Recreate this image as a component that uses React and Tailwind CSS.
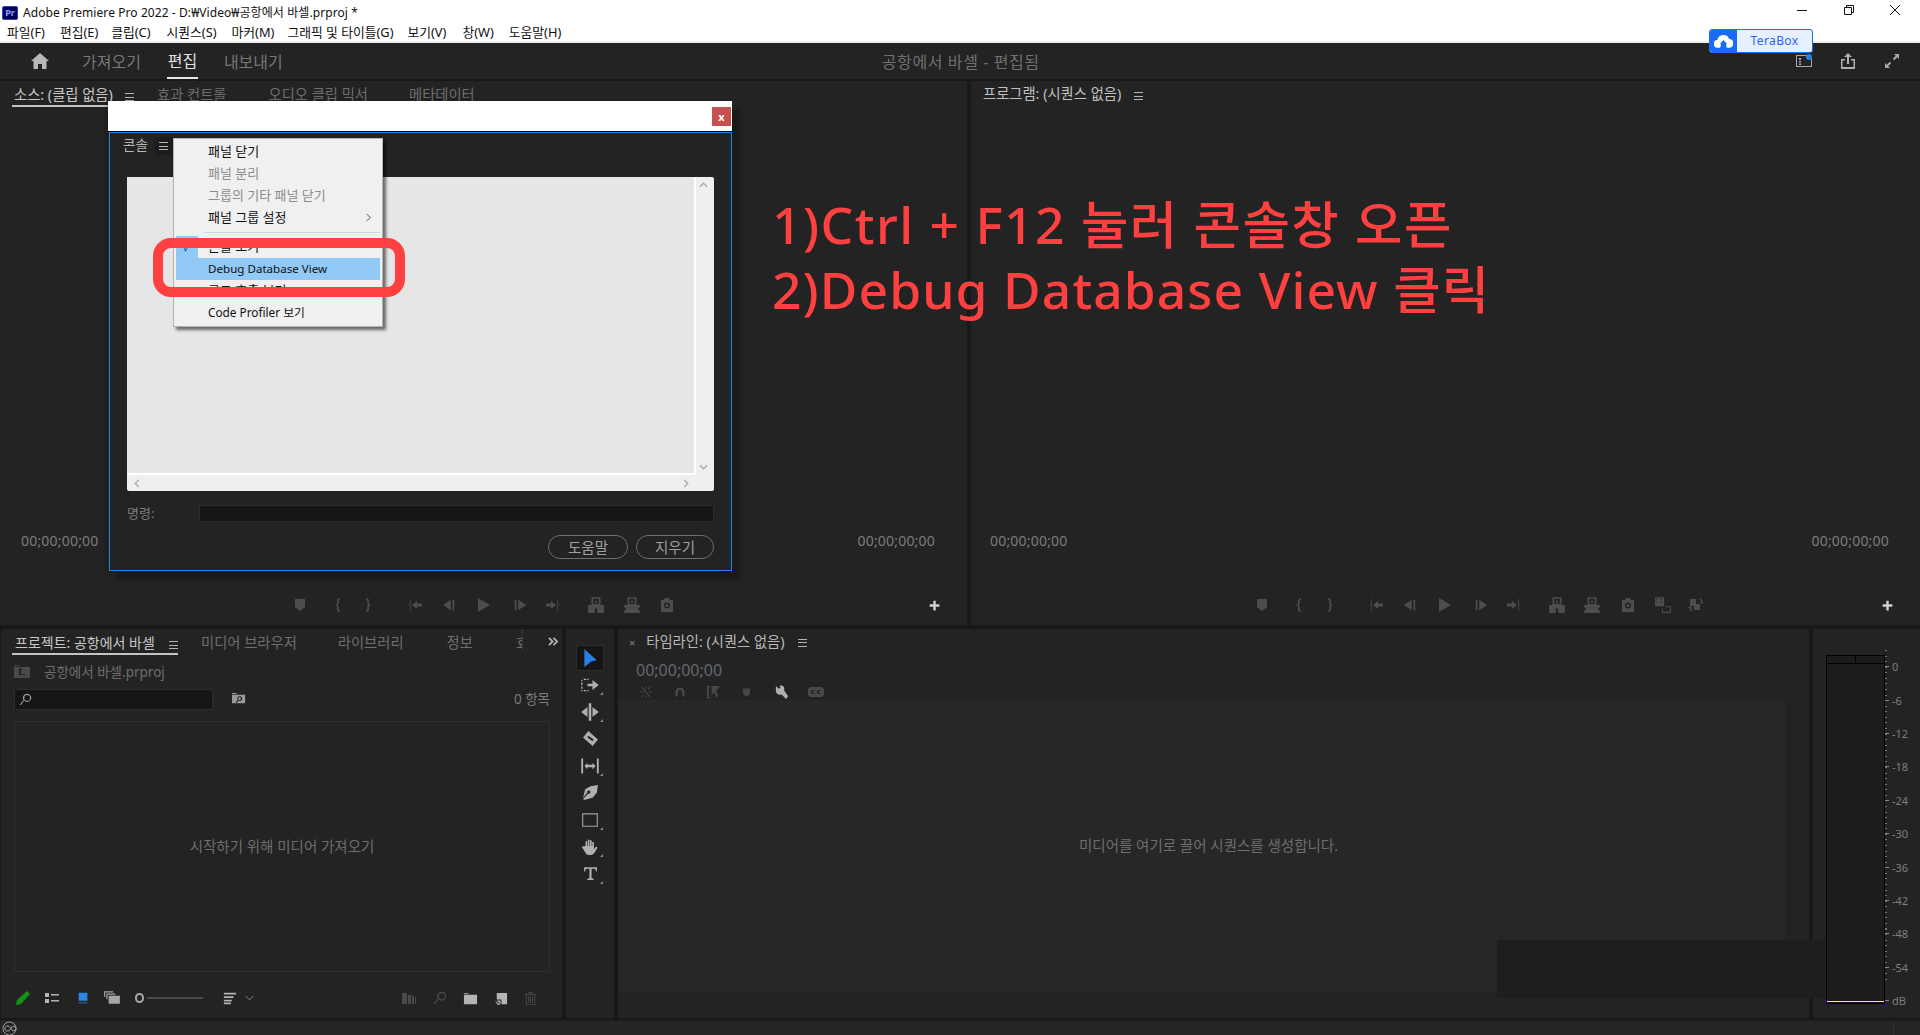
import React from "react";

const paths = {
  marker: <path d="M3 2h10v8l-5 4-5-4z" />,
  inMark: <path d="M11 1C7.500 1 8 4 8 6c0 1-.5 1.500-2 2 1.500.5 2 1 2 2 0 2-.5 5 3 5v-1.500c-1.500 0-1.300-2-1.300-3.500 0-1-.5-1.700-1.300-2 .8-.3 1.300-1 1.300-2 0-1.500-.2-3.500 1.300-3.500z" />,
  outMark: <path d="M5 1c3.500 0 3 3 3 5 0 1 .5 1.500 2 2-1.500.5-2 1-2 2 0 2 .5 5-3 5v-1.500c1.500 0 1.300-2 1.300-3.500 0-1 .5-1.700 1.300-2-.8-.3-1.300-1-1.300-2 0-1.500.2-3.500-1.300-3.500z" />,
  goIn: <path d="M4 2C2.500 2 3 4 3 6c0 1-.5 1.500-1.500 2C2.500 8.500 3 9 3 10c0 2-.5 4 1 4v-1c-.5 0-.2-2-.2-3 0-1-.4-1.500-1-2 .6-.5 1-1 1-2 0-1-.3-3 .2-3zM5 8l5-4v2.500h5v3h-5V12z" />,
  stepBack: <path d="M1 8l9-6v12zM12 2h2v12h-2z" />,
  play: <path d="M2 1l12 7-12 7z" />,
  stepFwd: <path d="M2 2h2v12H2zM6 2l9 6-9 6z" />,
  goOut: <path d="M12 2c1.500 0 1 2 1 4 0 1 .5 1.500 1.500 2-1 .5-1.500 1-1.500 2 0 2 .5 4-1 4v-1c.5 0 .2-2 .2-3 0-1 .4-1.500 1-2-.6-.5-1-1-1-2 0-1 .3-3-.2-3zM11 8L6 4v2.500H1v3h5V12z" />,
  insert: <path fillRule="evenodd" d="M4 1h8v7h3v7H9v-4H7v4H1V8h3zm1.500 1.500V7h5V2.500zm2.500 1L6.500 6h3z" />,
  overwrite: <path fillRule="evenodd" d="M4 1h8v7h3v7H1V8h3zm1.500 1.500V7h5V2.500zm2.500 1L6.500 6h3zM1 10v3l2-1.500zm14 0l-2 1.500 2 1.500z" />,
  camera: <path fillRule="evenodd" d="M5 3l1-2h4l1 2h3v12H2V3zm3 2.500a3 3 0 100 6 3 3 0 000-6zm0 1.500a1.500 1.500 0 110 3 1.500 1.500 0 010-3z" />,
  lift: <path fillRule="evenodd" d="M1 1h8v8H1zm1 1v1h1V2zm0 3v1h1V5zm4-3v1h1V2zm0 3v1h1V5zM10 9h5v6H7v-4h1v3h6v-4h-4z" />,
  compare: <path fillRule="evenodd" d="M2 2h6v5h4v6H6V9H2zM12 1c1.500 1 2.500 2.500 2.500 4H16l-2 2-2-2h1c0-1-.5-2-1.500-3zM4 15c-1.500-1-2.500-2-2.500-4H0l2-2 2 2H3c0 1 .5 2 1.500 3z" />,
  plus: <path d="M6.500 2h3v4.500H14v3H9.500V14h-3V9.500H2v-3h4.500z" />,
  arrow: <path d="M3 0l11 10-5 1-6 5z" />,
  trackSelect: <><path d="M1 4h1v1H1zm2-1h2v1H3zm3 0h1v1H6zM1 6h1v2H1zm0 3h1v2H1zm0 3h1v1H1zm2 0h2v1H3zm3 0h1v1H6z" /><path d="M6 7h4V4l5 4-5 4V9H6z" /></>,
  ripple: <path d="M7 1h2v14H7zM1 8l5-4v8zm14 0l-5-4v8z" />,
  razor: <path fillRule="evenodd" d="M6 1l9 8-5 6-9-8zm0 4.500L5 7l5 3.500 1-1.500z" />,
  slip: <path d="M1 2h1.500v12H1zm12.500 0H15v12h-1.500zM3.500 8L6 5.500V7h4V5.500L12.500 8 10 10.500V9H6v1.500z" />,
  pen: <path fillRule="evenodd" d="M15 1l-1 7-4 5-8 2-1-1 5-5a1.500 1.500 0 10-1-1L1 13 3 5l5-3z" />,
  rect: <path fillRule="evenodd" d="M1 2h14v12H1zm1 1v10h12V3z" />,
  hand: <path d="M4 7V3.500c0-1 1.500-1 1.500 0V7h.5V2c0-1 1.500-1 1.500 0v5H8V2.500c0-1 1.500-1 1.500 0V7h.5V4c0-1 1.500-1 1.500 0v6l1.500-2c.7-.8 2 0 1.500 1l-2.500 4c-.7 1-1.500 2-3.500 2H7c-2 0-2.500-1-3-2L1 8.500C.5 7.500 1.500 7 2.200 7.500z" />,
  textTool: <path d="M2 2h12v4h-1c0-1.500-.5-2.500-2-2.500H9v9l2 .5v1H5v-1l2-.5v-9H5C3.500 3.500 3 4.500 3 6H2z" />,
  nest: <path d="M7.500 1h1v3h-1zm0 11h1v3h-1zM1 7.500h4v1H1zm10 0h4v1h-4zM3 3l1-1 9 11-1 1zM5 11l1 1-2 2-1-1zm7-9l1 1-2 2-1-1z" />,
  magnet: <path d="M2 14V8a6 6 0 0112 0v6h-3V8a3 3 0 00-6 0v6z" />,
  linked: <path d="M1 1h4v1H3v11h2v1H1zm5 0h9l-4 5 2 6-2 1-2-5-3 3z" />,
  wrench: <path d="M2 1l3 3 2-1-1-2c2-1 5 0 5 3 0 .5 0 1-.3 1.500L15 12l-2 3-5-5c-2 1-6 0-6-4z" />,
  cc: <path fillRule="evenodd" d="M2 3h12l2 2v6l-2 2H2l-2-2V5zm4.500 3H4L3 7v2l1 1h2.500V9H4.500V7h2zm6 0H10L9 7v2l1 1h2.500V9h-2V7h2z" />,
  pencil: <path d="M12 1l3 3-9 10-4 1H1l1-5z" />,
  listView: <path d="M1 3h4v4H1zm0 6h4v4H1zm6-5h8v1.500H7zm0 6h8v1.500H7z" />,
  iconView: <path d="M3 2h10v9H3zm0 11h10v1H3z" />,
  freeform: <path d="M1 2h8v1H2v4H1zm2 2h8v1H4v4H3zm2 2h10v7H5z" />,
  sort: <path d="M1 2h14v2H1zm0 4h11v2H1zm0 4h9v2H1zm0 3h8v2H1z" />,
  bins: <path d="M1 3h5v11H1zm6 2h3v9H7zm4 1h2v8h-2zm3 1h1v7h-1z" />,
  find: <path fillRule="evenodd" d="M10 1a5 5 0 11-3.800 8.200L2 15l-1-1 4.500-5.500A5 5 0 0110 1zm0 1.500a3.500 3.500 0 100 7 3.500 3.500 0 000-7z" />,
  folder: <path d="M1 2h5v1H1zm0 2h14v10H1z" />,
  newItem: <path d="M4 2h11v12H9v-5H4zm0 8h4v4zM2 10l6 5H5z" />,
  trash: <path fillRule="evenodd" d="M6 1h4v2h4v1h-1v11H3V4H2V3h4zm1 1v1h2V2zM4 4v10h8V4zm1.500 1.500h1v7h-1zm2 0h1v7h-1zm2 0h1v7h-1z" />,
  share: <path fillRule="evenodd" d="M8 0l4 4h-3v7H7V4H4zM1 6h4v1.500H2.500V14h11V7.500H11V6h4v10H1z" />,
  expand: <path d="M10 1h5v5l-1.800-1.800-3 3L8.800 5.800l3-3zM6 15H1v-5l1.800 1.800 3-3 1.400 1.400-3 3z" />,
  folderUp: <path fillRule="evenodd" d="M0 1h6v1H0zm0 2h16v11H0zm5 3v5h6v-1H7V6h1.500L6.500 4 4.500 6z" />,
  binFind: <path fillRule="evenodd" d="M0 1h5v1H0zm0 2h14v9H0zm8 1.500a2.500 2.500 0 00-2 4L4 11l.8.6L7 9a2.500 2.500 0 101-4.500zm0 1a1.500 1.500 0 110 3 1.500 1.500 0 010-3z" />,
  workspace: <path fillRule="evenodd" d="M0 2h13v1H1v10h14V6h1v8H0zm3 3h2v2H3zm0 3h2v1.500H3zm0 2.500h2V12H3z" />,
};

const Icon = ({ name, className = "w-4 h-4 text-[#4d4d4d]" }) => (
  <svg viewBox="0 0 16 16" fill="currentColor" className={`shrink-0 ${className}`}>
    {paths[name]}
  </svg>
);

const Burger = ({ className = "" }) => (
  <div className={`w-[9px] h-[8px] flex flex-col justify-between shrink-0 ${className}`}>
    <div className="h-px bg-[#b4b4b4]" />
    <div className="h-px bg-[#b4b4b4]" />
    <div className="h-px bg-[#b4b4b4]" />
  </div>
);

const Tool = ({ name, size = "w-[20px] h-[20px]", color = "text-[#b0b0b0]", corner = true }) => (
  <div className="relative flex items-center justify-center w-[28px] h-[27px]">
    <Icon name={name} className={`${size} ${color}`} />
    {corner && <div className="absolute right-[1px] bottom-[3px] w-0 h-0 border-l-[3px] border-l-transparent border-b-[3px] border-b-[#8a8a8a]" />}
  </div>
);

const Timecode = () => (
  <span className="text-[14px] leading-none tracking-[0.2px] text-[#7c7c7c]">00;00;00;00</span>
);

const TitleBar = () => (
  <div className="h-[43px] bg-white border-b-2 border-[#f0f0f0] flex flex-col shrink-0">
    <div className="h-[25px] flex items-center text-[12px] text-[#111]">
      <div className="ml-[2px] w-[16px] h-[14px] bg-[#00005b] border border-[#3b3bb0] rounded-[2px] flex items-center justify-center text-[9px] font-bold leading-none text-[#9999ff]">
        Pr
      </div>
      <span className="ml-[5px] whitespace-nowrap tracking-[0.08px]">Adobe Premiere Pro 2022 - D:₩Video₩공항에서 바셀.prproj *</span>
      <div className="ml-auto flex items-center mb-[5px]">
        <svg viewBox="0 0 12 12" className="w-[12px] h-[12px] mr-[35px]"><path d="M1 6.500h10" stroke="#111" /></svg>
        <svg viewBox="0 0 12 12" className="w-[12px] h-[12px] mr-[34px]" fill="none" stroke="#111"><path d="M1.500 3.500h7v7h-7zM3.500 3.500v-2h7v7h-2" /></svg>
        <svg viewBox="0 0 12 12" className="w-[12px] h-[12px] mr-[19px]" stroke="#111"><path d="M1 1l10 10M11 1L1 11" /></svg>
      </div>
    </div>
    <div className="h-[16px] pb-[1px] flex items-center text-[12.8px] leading-none text-[#111] whitespace-nowrap pl-[7px]">
      <span>파일(F)</span>
      <span className="ml-[15px]">편집(E)</span>
      <span className="ml-[13px]">클립(C)</span>
      <span className="ml-[16px]">시퀀스(S)</span>
      <span className="ml-[15px]">마커(M)</span>
      <span className="ml-[13px]">그래픽 및 타이틀(G)</span>
      <span className="ml-[14px]">보기(V)</span>
      <span className="ml-[16px]">창(W)</span>
      <span className="ml-[15px]">도움말(H)</span>
    </div>
  </div>
);

const Header = () => (
  <div className="h-[36px] mb-[2px] bg-[#232323] flex items-stretch shrink-0 relative">
    <div className="w-[82px] flex items-center pl-[31px]">
      <svg viewBox="0 0 18 16" className="w-[18px] h-[16px]" fill="#b8b8b8"><path d="M9 0l9 8h-2.500v8H11v-5H7v5H2.500V8H0z" /></svg>
    </div>
    <div className="flex items-center text-[16px] leading-none text-[#777] pt-[2px]">
      <span>가져오기</span>
      <div className="ml-[26px] w-[31px] h-full flex items-center justify-center text-[#e0e0e0] border-b-2 border-[#e6e6e6]">편집</div>
      <span className="ml-[26px]">내보내기</span>
    </div>
    <div className="ml-[599px] flex items-center text-[16px] tracking-[0.6px] pt-[1px] text-[#707070] whitespace-nowrap">공항에서 바셀 - 편집됨</div>
    <div className="ml-auto flex items-center pr-[20px]">
      <div className="relative mr-[28px]">
        <Icon name="workspace" className="w-4 h-4 text-[#a8a8a8]" />
        <div className="absolute top-[1px] right-0 w-[6px] h-[6px] rounded-full bg-[#2680eb]" />
      </div>
      <Icon name="share" className="w-4 h-4 text-[#b0b0b0] mr-[28px]" />
      <Icon name="expand" className="w-4 h-4 text-[#a8a8a8]" />
    </div>
  </div>
);

const Transport = ({ children, className }) => (
  <div className={`h-[20px] mb-[10px] flex items-center shrink-0 ${className}`}>{children}</div>
);

const Plus = () => <Icon name="plus" className="w-[13px] h-[13px] text-[#d0d0d0] ml-auto" />;

const SourcePanel = () => (
  <div className="w-[967px] bg-[#232323] flex flex-col">
    <div className="h-[26px] flex items-start pl-[12px] text-[14.3px] leading-none text-[#6e6e6e] whitespace-nowrap">
      <div className="h-[26px] pl-[2px] w-[102px] border-b-2 border-[#c4c4c4] pt-[7px] text-[#c8c8c8]">소스: (클립 없음)</div>
      <Burger className="ml-[11px] mt-[12px]" />
      <span className="ml-[23px] pt-[7px]">효과 컨트롤</span>
      <span className="ml-[42px] pt-[7px]">오디오 클립 믹서</span>
      <span className="ml-[41px] pt-[7px]">메타데이터</span>
    </div>
    <div className="mt-auto mb-[44px] h-[20px] flex items-center justify-between pl-[21px] pr-[32px]">
      <Timecode />
      <Timecode />
    </div>
    <Transport className="pl-[292px] pr-[26px]">
      <Icon name="marker" />
      <Icon name="inMark" className="w-4 h-4 text-[#4d4d4d] ml-[21px]" />
      <Icon name="outMark" className="w-4 h-4 text-[#4d4d4d] ml-[16px]" />
      <Icon name="goIn" className="w-4 h-4 text-[#4d4d4d] ml-[30px]" />
      <Icon name="stepBack" className="w-[14px] h-[14px] text-[#4d4d4d] ml-[19px]" />
      <Icon name="play" className="w-4 h-4 text-[#4d4d4d] ml-[20px]" />
      <Icon name="stepFwd" className="w-[14px] h-[14px] text-[#4d4d4d] ml-[21px]" />
      <Icon name="goOut" className="w-4 h-4 text-[#4d4d4d] ml-[18px]" />
      <Icon name="insert" className="w-[18px] h-[18px] text-[#4d4d4d] ml-[26px]" />
      <Icon name="overwrite" className="w-[18px] h-[18px] text-[#4d4d4d] ml-[18px]" />
      <Icon name="camera" className="w-4 h-4 text-[#4d4d4d] ml-[18px]" />
      <Plus />
    </Transport>
  </div>
);

const ProgramPanel = () => (
  <div className="flex-1 bg-[#232323] flex flex-col">
    <div className="h-[26px] flex items-start pl-[12px] text-[14.3px] leading-none text-[#c0c0c0] whitespace-nowrap">
      <span className="pt-[6px]">프로그램: (시퀀스 없음)</span>
      <Burger className="ml-[13px] mt-[11px]" />
    </div>
    <div className="mt-auto mb-[44px] h-[20px] flex items-center justify-between pl-[19px] pr-[31px]">
      <Timecode />
      <Timecode />
    </div>
    <Transport className="pl-[283px] pr-[26px]">
      <Icon name="marker" />
      <Icon name="inMark" className="w-4 h-4 text-[#4d4d4d] ml-[20px]" />
      <Icon name="outMark" className="w-4 h-4 text-[#4d4d4d] ml-[17px]" />
      <Icon name="goIn" className="w-4 h-4 text-[#4d4d4d] ml-[29px]" />
      <Icon name="stepBack" className="w-[14px] h-[14px] text-[#4d4d4d] ml-[19px]" />
      <Icon name="play" className="w-4 h-4 text-[#4d4d4d] ml-[20px]" />
      <Icon name="stepFwd" className="w-[14px] h-[14px] text-[#4d4d4d] ml-[21px]" />
      <Icon name="goOut" className="w-4 h-4 text-[#4d4d4d] ml-[18px]" />
      <Icon name="insert" className="w-[18px] h-[18px] text-[#4d4d4d] ml-[26px]" />
      <Icon name="overwrite" className="w-[18px] h-[18px] text-[#4d4d4d] ml-[17px]" />
      <Icon name="camera" className="w-4 h-4 text-[#4d4d4d] ml-[19px]" />
      <Icon name="lift" className="w-[18px] h-[18px] text-[#4d4d4d] ml-[18px]" />
      <Icon name="compare" className="w-4 h-4 text-[#4d4d4d] ml-[16px]" />
      <Plus />
    </Transport>
  </div>
);

const ProjectPanel = () => (
  <div className="ml-[1px] w-[561px] bg-[#232323] flex flex-col pl-[13px] pr-[12px]">
    <div className="h-[26px] flex items-start text-[14.3px] leading-none text-[#6e6e6e] whitespace-nowrap -ml-[2px]">
      <div className="h-[26px] shrink-0 pl-[3px] w-[166px] border-b-2 border-[#c4c4c4] flex items-start pt-[7px] text-[14px] text-[#c8c8c8]">
        <span>프로젝트: 공항에서 바셀</span>
        <Burger className="ml-auto mt-[5px]" />
      </div>
      <span className="ml-[23px] shrink-0 pt-[7px]">미디어 브라우저</span>
      <span className="ml-[41px] shrink-0 pt-[7px]">라이브러리</span>
      <span className="ml-[43px] shrink-0 pt-[7px]">정보</span>
      <span className="ml-[43px] shrink-0 pt-[7px] w-[7px] overflow-hidden border-r border-[#3a3a3a]">효과</span>
      <svg viewBox="0 0 12 10" className="ml-[25px] mt-[8px] w-[11px] h-[9px] shrink-0" fill="none" stroke="#b0b0b0" strokeWidth="2"><path d="M1 1l4 4-4 4M6 1l4 4-4 4" /></svg>
    </div>
    <div className="h-[34px] flex items-center text-[#6e6e6e] whitespace-nowrap">
      <Icon name="folderUp" className="w-4 h-4 text-[#4a4a4a]" />
      <span className="ml-[14px] text-[13.5px]">공항에서 바셀.prproj</span>
    </div>
    <div className="h-[21px] flex items-center">
      <div className="w-[199px] h-[21px] bg-[#151515] border border-[#2e2e2e] rounded-[2px] flex items-center pl-[4px]">
        <Icon name="find" className="w-[13px] h-[13px] text-[#a0a0a0]" />
      </div>
      <Icon name="binFind" className="w-[15px] h-[15px] text-[#9a9a9a] ml-[19px]" />
      <span className="ml-auto text-[13.5px] text-[#7c7c7c]">0 항목</span>
    </div>
    <div className="mt-[11px] h-[251px] border border-[#2e2e2e] flex items-center justify-center text-[14.5px] text-[#6e6e6e]">
      시작하기 위해 미디어 가져오기
    </div>
    <div className="flex-1 flex items-center pl-[1px] pt-[6px]">
      <Icon name="pencil" className="w-[16px] h-[16px] text-[#149414]" />
      <Icon name="listView" className="w-[16px] h-[16px] text-[#b4b4b4] ml-[13px]" />
      <Icon name="iconView" className="w-[14px] h-[14px] text-[#2f86ea] ml-[16px]" />
      <Icon name="freeform" className="w-[18px] h-[18px] text-[#a6a6a6] ml-[13px]" />
      <div className="w-[9px] h-[10px] rounded-full border-2 border-[#a6a6a6] ml-[14px]" />
      <div className="w-[56px] h-[2px] bg-[#4a4a4a] ml-[3px]" />
      <Icon name="sort" className="w-[14px] h-[14px] text-[#b4b4b4] ml-[20px]" />
      <svg viewBox="0 0 10 6" className="w-[9px] h-[6px] ml-[8px]" fill="none" stroke="#9a9a9a"><path d="M1 1l4 4 4-4" /></svg>
      <Icon name="bins" className="w-[16px] h-[16px] text-[#4a4a4a] ml-[147px]" />
      <Icon name="find" className="w-[14px] h-[14px] text-[#4a4a4a] ml-[16px]" />
      <Icon name="folder" className="w-[15px] h-[15px] text-[#b4b4b4] ml-[16px]" />
      <Icon name="newItem" className="w-[15px] h-[15px] text-[#b4b4b4] ml-[15px]" />
      <Icon name="trash" className="w-[15px] h-[15px] text-[#4a4a4a] ml-[15px]" />
    </div>
  </div>
);

const Tools = () => (
  <div className="w-[48px] bg-[#232323] flex flex-col items-center pt-[16px]">
    <div className="relative flex items-center justify-center w-[28px] h-[26px] bg-[#151515] border border-[#2e2e2e] rounded-[3px]">
      <Icon name="arrow" className="w-[18px] h-[18px] text-[#2680eb]" />
    </div>
    <Tool name="trackSelect" />
    <Tool name="ripple" />
    <Tool name="razor" size="w-[17px] h-[17px]" corner={false} />
    <Tool name="slip" />
    <Tool name="pen" size="w-[17px] h-[17px]" corner={false} />
    <Tool name="rect" size="w-[18px] h-[18px]" color="text-[#a0a0a0]" />
    <Tool name="hand" size="w-[18px] h-[18px]" />
    <Tool name="textTool" size="w-[17px] h-[17px]" />
  </div>
);

const Timeline = () => (
  <div className="w-[1191px] bg-[#232323] flex flex-col">
    <div className="h-[71px] w-full flex flex-col pl-[11px] shrink-0">
      <div className="h-[27px] flex items-center text-[14.3px] leading-none text-[#b8b8b8] whitespace-nowrap">
        <span className="text-[11px] text-[#888]">×</span>
        <span className="ml-[11px]">타임라인: (시퀀스 없음)</span>
        <Burger className="ml-[13px]" />
      </div>
      <span className="mt-[6px] pl-[7px] text-[16px] leading-none text-[#63696f]">00;00;00;00</span>
      <div className="mt-[6px] h-[16px] pl-[10px] flex items-center">
        <Icon name="nest" className="w-[14px] h-[14px] text-[#484848]" />
        <Icon name="magnet" className="w-[12px] h-[12px] text-[#484848] ml-[21px]" />
        <Icon name="linked" className="w-[15px] h-[15px] text-[#484848] ml-[20px]" />
        <Icon name="marker" className="w-[11px] h-[11px] text-[#484848] ml-[20px]" />
        <Icon name="wrench" className="w-[15px] h-[15px] text-[#b0b0b0] ml-[22px]" />
        <Icon name="cc" className="w-[16px] h-[16px] text-[#484848] ml-[19px]" />
      </div>
    </div>
    <div className="h-[292px] mr-[24px] bg-[#272727] flex items-center justify-center pl-[14px] text-[14.5px] text-[#6e6e6e] shrink-0">
      미디어를 여기로 끌어 시퀀스를 생성합니다.
    </div>
  </div>
);

const dbLabels = ["0", "-6", "-12", "-18", "-24", "-30", "-36", "-42", "-48", "-54", "dB"];

const Meter = () => (
  <div className="flex-1 bg-[#232323] flex items-start pl-[13px] pt-[26px] relative z-10">
    <div className="w-[59px] h-[349px] bg-[#1c1c1c] border border-black flex flex-col shrink-0">
      <div className="h-[8px] border-b border-black flex shrink-0">
        <div className="w-1/2 border-r border-black" />
      </div>
      <div className="flex-1 flex flex-col justify-end">
        <div className="h-[1px] bg-[#ffff00] mb-[1px]" />
      </div>
    </div>
    <div className="-mt-[5px] flex flex-col text-[11px] leading-none text-[#7f7f7f] bg-[repeating-linear-gradient(to_bottom,#777_0,#777_1px,transparent_1px,transparent_5.57px)] bg-no-repeat bg-[length:2px_334px]">
      {dbLabels.map((d) => (
        <div key={d} className="h-[33.4px] flex items-center">
          <div className="w-[4px] h-px bg-[#888]" />
          <span className="ml-[3px]">{d}</span>
        </div>
      ))}
    </div>
  </div>
);

const Menu = () => {
  const Row = ({ children, gray, active, className = "text-[13px] pb-[2px]" }) => (
    <div className={`relative h-[22px] ml-[2px] mr-[2px] flex items-center pl-[32px] leading-none whitespace-nowrap ${gray ? "text-[#8c8c8c]" : "text-[#111]"} ${active ? "bg-[#90c8f6]" : ""} ${className}`}>
      {children}
    </div>
  );
  return (
    <div className="absolute left-[65px] top-[37px] w-[210px] h-[189px] bg-[#f0f0f0] border border-[#b4b4b4] shadow-[3px_3px_3px_rgba(0,0,0,0.55)] pt-[2px] flex flex-col">
      <Row>패널 닫기</Row>
      <Row gray>패널 분리</Row>
      <Row gray>그룹의 기타 패널 닫기</Row>
      <Row>
        패널 그룹 설정
        <svg viewBox="0 0 6 10" className="w-[5px] h-[9px] ml-auto mr-[9px]" fill="none" stroke="#333"><path d="M1 1l4 4-4 4" /></svg>
      </Row>
      <div className="h-[7px] flex items-center pl-[30px] pr-[2px]">
        <div className="h-px w-full bg-[#d4d4d4]" />
      </div>
      <Row>
        <div className="absolute left-0 top-0 w-[22px] h-[22px] bg-[#90c8f6] flex items-center justify-center text-[10px] text-[#111]">✓</div>
        콘솔 보기
      </Row>
      <Row active className="text-[11.6px]">Debug Database View</Row>
      <Row>로그 호출 보기</Row>
      <Row className="text-[11.8px]">Code Profiler 보기</Row>
    </div>
  );
};

const ConsoleDialog = () => (
  <div className="absolute left-[108px] top-[101px] w-[624px] shadow-[8px_8px_4px_rgba(0,0,0,0.25),-2px_0_3px_rgba(0,0,0,0.2)] z-20">
    <div className="h-[30px] bg-white flex items-center justify-end pr-[1px]">
      <div className="w-[19px] h-[19px] bg-[#c75050] flex items-center justify-center text-[11px] font-bold leading-none text-white">x</div>
    </div>
    <div className="h-px bg-black" />
    <div className="ml-[1px] h-[439px] bg-[#232323] border border-[#2680eb] flex flex-col px-[17px]">
      <div className="h-[44px] flex items-start shrink-0 text-[13.5px] text-[#b8b8b8]">
        <span className="mt-[3px] -ml-[4px] leading-[18px]">콘솔</span>
        <div className="ml-[7px] mt-[4px] w-[18px] h-[18px] bg-[#1c1c1c] flex items-center justify-center">
          <Burger />
        </div>
      </div>
      <div className="h-[314px] bg-[#efefef] rounded-[2px] flex flex-col shrink-0">
        <div className="flex-1 flex">
          <div className="flex-1 bg-[#e6e6e6] border-r-2 border-b-2 border-white" />
          <div className="w-[18px] flex flex-col items-center justify-between py-[5px] pr-[3px]">
            <svg viewBox="0 0 10 6" className="w-[9px] h-[6px]" fill="none" stroke="#aaa" strokeWidth="1.500"><path d="M1 5l4-4 4 4" /></svg>
            <svg viewBox="0 0 10 6" className="w-[9px] h-[6px]" fill="none" stroke="#aaa" strokeWidth="1.500"><path d="M1 1l4 4 4-4" /></svg>
          </div>
        </div>
        <div className="h-[16px] flex items-center justify-between pl-[7px] pr-[25px]">
          <svg viewBox="0 0 6 10" className="w-[6px] h-[9px]" fill="none" stroke="#aaa" strokeWidth="1.500"><path d="M5 1L1 5l4 4" /></svg>
          <svg viewBox="0 0 6 10" className="w-[6px] h-[9px]" fill="none" stroke="#aaa" strokeWidth="1.500"><path d="M1 1l4 4-4 4" /></svg>
        </div>
      </div>
      <div className="mt-[14px] h-[17px] flex items-center shrink-0">
        <span className="w-[72px] text-[13px] text-[#7c7c7c]">명령:</span>
        <div className="flex-1 h-full bg-[#151515] border border-[#2e2e2e] rounded-[1px]" />
      </div>
      <div className="mt-[13px] flex justify-end gap-[8px]">
        <button className="w-[80px] h-[24px] rounded-full border border-[#6e6e6e] text-[14.5px] leading-none text-[#a0a0a0]">도움말</button>
        <button className="w-[78px] h-[24px] rounded-full border border-[#6e6e6e] text-[14.5px] leading-none text-[#a0a0a0]">지우기</button>
      </div>
    </div>
    <Menu />
  </div>
);

const TeraBox = () => (
  <div className="absolute left-[1709px] top-[29px] w-[104px] h-[24px] rounded-[3px] border border-[#1a6cf5] bg-[#e6f0ff] flex overflow-hidden z-30">
    <div className="w-[27px] bg-[#1a6cf5] flex items-center justify-center">
      <svg viewBox="0 0 20 14" className="w-[19px] h-[14px]" fill="white">
        <path d="M4 14a4 4 0 01-.5-8A6.500 6.500 0 0116 5a4.500 4.500 0 010 9h-2.500l-1-3.500H14L10 6 6 10.500h1.500L6.500 14z" />
      </svg>
    </div>
    <span className="flex-1 flex items-center justify-center text-[12px] leading-none tracking-[0.4px] text-[#2f62f5]">TeraBox</span>
  </div>
);

export default function App() {
  return (
    <div className="relative w-[1920px] h-[1035px] overflow-hidden bg-[#181818] flex flex-col font-['Noto_Sans','Noto_Sans_CJK_KR',sans-serif]">
      <TitleBar />
      <Header />
      <div className="h-[544px] flex gap-[4px] shrink-0">
        <SourcePanel />
        <ProgramPanel />
      </div>
      <div className="mt-[4px] h-[389px] flex gap-[4px] shrink-0">
        <ProjectPanel />
        <Tools />
        <Timeline />
        <Meter />
      </div>
      <div className="mt-[2px] flex-1 bg-[#252525] flex items-center pl-[2px] border-t border-[#1e1e1e]">
        <svg viewBox="0 0 16 16" className="w-[15px] h-[15px]" fill="none" stroke="#a8a8a8"><circle cx="8" cy="8" r="7" /><path d="M3 8a3 3 0 015-2l3 4a2.500 2.500 0 100-4L8 10a3 3 0 01-5-2z" /></svg>
        <div className="ml-auto mr-[26px] w-px h-full bg-[#333]" />
      </div>

      <ConsoleDialog />
      <TeraBox />

      {/* annotations pasted over the capture */}
      <div className="absolute left-[153px] top-[238px] w-[252px] h-[59px] border-[10px] border-[#ff4040] rounded-[18px] z-30" />
      <div className="absolute left-[772px] top-[192px] text-[51.5px] leading-[65px] font-medium text-[#ff4040] whitespace-nowrap z-30">
        <div className="tracking-[1.5px]">1)Ctrl + F12 눌러 콘솔창 오픈</div>
        <div className="tracking-[1.1px]">2)Debug Database View 클릭</div>
      </div>
      <div className="absolute left-[1497px] top-[940px] w-[328px] h-[58px] bg-[#1e1e1e] z-10" />
    </div>
  );
}
